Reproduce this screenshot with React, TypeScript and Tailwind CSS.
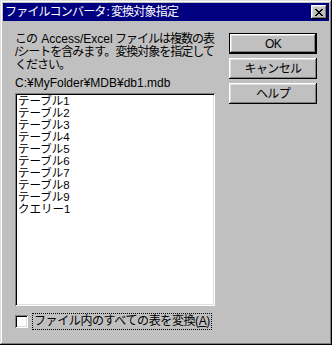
import React from 'react'

const font = 'font-["Liberation_Sans","Noto_Sans_CJK_JP",sans-serif]'

const raised =
  'shadow-[inset_-1px_-1px_#000,inset_1px_1px_#fff,inset_-2px_-2px_#808080,inset_2px_2px_#dfdfdf]'
const sunken =
  'shadow-[inset_1px_1px_#808080,inset_-1px_-1px_#fff,inset_2px_2px_#000,inset_-2px_-2px_#dfdfdf]'

const items = [
  'テーブル1',
  'テーブル2',
  'テーブル3',
  'テーブル4',
  'テーブル5',
  'テーブル6',
  'テーブル7',
  'テーブル8',
  'テーブル9',
  'クエリー1',
]

function CloseGlyph() {
  // 8x7 pixel cross, as in the classic caption button
  const rows = ['11000011', '01100110', '00111100', '00011000', '00111100', '01100110', '11000011']
  return (
    <svg width="8" height="7" viewBox="0 0 8 7" shapeRendering="crispEdges">
      {rows.map((row, y) =>
        row.split('').map((c, x) =>
          c === '1' ? <rect key={`${x}-${y}`} x={x} y={y} width="1" height="1" fill="#000" /> : null
        )
      )}
    </svg>
  )
}

function Button({ label, is_default }: { label: string; is_default?: boolean }) {
  return (
    <div className={`h-[21px] w-[88px] ${is_default ? 'border border-black' : ''}`}>
      <div
        className={`flex h-full w-full items-center justify-center bg-[#c0c0c0] text-[12px] leading-none tracking-[-0.6px] text-black ${raised}`}
      >
        {label}
      </div>
    </div>
  )
}

export default function App() {
  return (
    <div
      className={`flex h-[345px] w-[332px] flex-col bg-[#c0c0c0] p-[3px] text-black ${font} shadow-[inset_-1px_-1px_#000,inset_1px_1px_#dfdfdf,inset_-2px_-2px_#808080,inset_2px_2px_#fff]`}
    >
      {/* caption */}
      <div className="flex h-[18px] items-center justify-between bg-[#000080] pl-[2px] pr-[2px]">
        <span className="whitespace-nowrap text-[12px] leading-none tracking-[-0.8px] text-white">
          ファイルコンバータ<span className="mx-[1px] tracking-normal">:</span>変換対象指定
        </span>
        <div className={`flex h-[14px] w-[16px] items-center justify-center bg-[#c0c0c0] ${raised}`}>
          <CloseGlyph />
        </div>
      </div>

      <div className="flex flex-1">
        {/* left column */}
        <div className="flex w-[212px] flex-col pl-[12px] pt-[12px]">
          <div className="whitespace-nowrap text-[12px] leading-[13px] tracking-[-1px]">
            <div>
              この <span className="ml-[2px] tracking-normal">Access/Excel</span> ファイルは複数の表
            </div>
            <div>/シートを含みます。変換対象を指定して</div>
            <div>ください。</div>
          </div>
          <div className="mt-[5px] whitespace-nowrap text-[12px] leading-[12px]">C:¥MyFolder¥MDB¥db1.mdb</div>

          <div className={`mt-[4px] h-[213px] w-[200px] bg-white p-[2px] ${sunken}`}>
            <div className="pl-[1px] text-[11.5px] leading-[12px]">
              {items.map(item => (
                <div key={item} className="h-[12px] whitespace-nowrap">
                  {item}
                </div>
              ))}
            </div>
          </div>

          <div className="mt-[7px] flex items-center gap-[4px]">
            <div className={`h-[13px] w-[13px] bg-white ${sunken}`} />
            <div className="h-[17px] whitespace-nowrap border border-dotted border-black px-[1px] text-[12px] leading-[15px] tracking-[-0.4px]">
              ファイル内のすべての表を変換(<span className="underline">A</span>)
            </div>
          </div>
        </div>

        {/* buttons */}
        <div className="ml-[14px] flex flex-col gap-[4px] pt-[12px]">
          <Button label="OK" is_default />
          <Button label="キャンセル" />
          <Button label="ヘルプ" />
        </div>
      </div>
    </div>
  )
}
